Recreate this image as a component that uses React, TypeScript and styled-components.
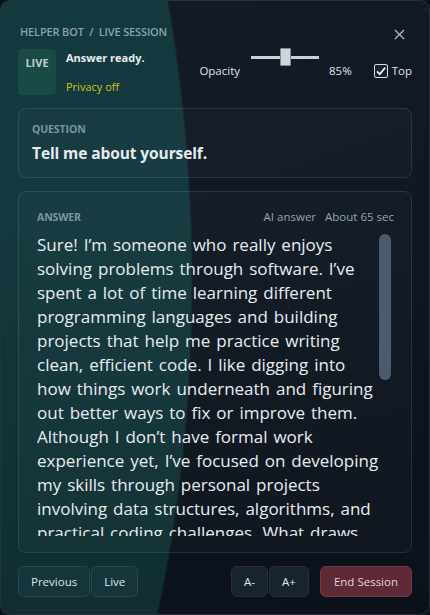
import styled, { createGlobalStyle } from "styled-components";
import { useState } from "react";

const answer =
  "Sure! I’m someone who really enjoys solving problems through software. I’ve spent a lot of time learning different programming languages and building projects that help me practice writing clean, efficient code. I like digging into how things work underneath and figuring out better ways to fix or improve them. Although I don’t have formal work experience yet, I’ve focused on developing my skills through personal projects involving data structures, algorithms, and practical coding challenges. What draws me to software development is the mix of logic and creativity it needs. I enjoy taking a vague problem, breaking it into smaller parts and slowly turning it into something that actually works.";

const Global = createGlobalStyle`
  html, body {
    margin: 0;
    background: #0b1118;
  }
  * { box-sizing: border-box; }
`;

const App = () => {
  const [opacity, setOpacity] = useState(85);
  const [onTop, setOnTop] = useState(true);

  return (
    <>
      <Global />
      <Window>
        <TopBar>
          <Crumb>Helper Bot&nbsp;&nbsp;/&nbsp;&nbsp;Live Session</Crumb>
          <Close aria-label="close">
            <svg width="11" height="11" viewBox="0 0 11 11">
              <path d="M1 1L10 10M10 1L1 10" stroke="#aeb8c2" strokeWidth="1.3" />
            </svg>
          </Close>
        </TopBar>

        <StatusRow>
          <LiveBadge>LIVE</LiveBadge>
          <StatusText>
            <Ready>Answer ready.</Ready>
            <Privacy>Privacy off</Privacy>
          </StatusText>
          <Controls>
            <span>Opacity</span>
            <Range
              type="range"
              min={70}
              max={100}
              value={opacity}
              onChange={(e) => setOpacity(Number(e.target.value))}
            />
            <Percent>{opacity}%</Percent>
            <Check onClick={() => setOnTop(!onTop)}>
              <Box>
                {onTop && (
                  <svg width="12" height="12" viewBox="0 0 12 12">
                    <path d="M2 6.3L4.8 9.2L10.2 2.6" fill="none" stroke="#f1f4f6" strokeWidth="1.8" />
                  </svg>
                )}
              </Box>
              Top
            </Check>
          </Controls>
        </StatusRow>

        <QuestionCard>
          <Tag>Question</Tag>
          <QuestionText>Tell me about yourself.</QuestionText>
        </QuestionCard>

        <AnswerCard>
          <AnswerHead>
            <Tag>Answer</Tag>
            <Meta>
              <span>AI answer</span>
              <span>About 65 sec</span>
            </Meta>
          </AnswerHead>
          <Scroller>
            <AnswerBody>{answer}</AnswerBody>
            {/* thumb sits over the scroll area, like an overlay scrollbar */}
            <Thumb />
          </Scroller>
        </AnswerCard>

        <Footer>
          <Group>
            <Btn $tone="teal">Previous</Btn>
            <Btn $tone="teal">Live</Btn>
          </Group>
          <Group>
            <Btn $tone="slate">A-</Btn>
            <Btn $tone="slate">A+</Btn>
            <EndBtn>End Session</EndBtn>
          </Group>
        </Footer>
      </Window>
    </>
  );
};

export default App;

const Window = styled.div`
  width: 430px;
  height: 615px;
  display: flex;
  flex-direction: column;
  padding: 21px 17px 17px 17px;
  border: 1px solid #25323a;
  border-radius: 10px;
  overflow: hidden;
  font-family: "Open Sans", "Noto Sans", sans-serif;
  color: #e4eaee;
  background:
    linear-gradient(180deg, rgba(0, 0, 0, 0) 35%, rgba(3, 8, 12, 0.22) 100%),
    radial-gradient(ellipse 592px 994px at -400px 280px, rgba(20, 60, 64, 0.9) 99.6%, transparent 100%),
    linear-gradient(160deg, #121c27 0%, #0f1722 60%, #0d141e 100%);
`;

const TopBar = styled.div`
  display: flex;
  align-items: center;
  justify-content: space-between;
  height: 18px;
  padding-left: 2px;
`;

const Crumb = styled.div`
  font-size: 11px;
  font-weight: 600;
  letter-spacing: -0.15px;
  text-transform: uppercase;
  color: #8ea2ad;
`;

const Close = styled.button`
  background: none;
  border: none;
  padding: 0;
  margin-right: 7px;
  margin-top: 6px;
  display: flex;
  cursor: pointer;
`;

const StatusRow = styled.div`
  display: flex;
  align-items: flex-start;
  margin-top: 9px;
  height: 47px;
`;

const LiveBadge = styled.div`
  width: 38px;
  height: 46px;
  border-radius: 4px;
  background: #1a4a45;
  color: #bdd0cc;
  font-size: 11px;
  font-weight: 700;
  text-align: center;
  padding-top: 6px;
`;

const StatusText = styled.div`
  display: flex;
  flex-direction: column;
  justify-content: space-between;
  height: 46px;
  margin-left: 10px;
  padding: 1px 0 1px;
`;

const Ready = styled.div`
  font-size: 11px;
  font-weight: 700;
  color: #e8eef1;
`;

const Privacy = styled.div`
  font-size: 11px;
  color: #d8c21f;
`;

const Controls = styled.div`
  display: flex;
  align-items: center;
  margin-left: auto;
  margin-top: 14px;
  font-size: 11.5px;
  color: #dfe5ea;
`;

const Range = styled.input`
  -webkit-appearance: none;
  appearance: none;
  width: 68px;
  height: 18px;
  margin: 0 0 0 11px;
  align-self: flex-start;
  margin-top: -15px;
  background: transparent;

  &::-webkit-slider-runnable-track {
    height: 3px;
    background: #c9d1d7;
  }
  &::-webkit-slider-thumb {
    -webkit-appearance: none;
    width: 11px;
    height: 18px;
    margin-top: -8px;
    background: #cbd5dc;
    border: 1px solid #7f8a93;
    border-radius: 1px;
  }
`;

const Percent = styled.span`
  margin-left: 10px;
`;

const Check = styled.label`
  display: flex;
  align-items: center;
  gap: 4px;
  margin-left: 22px;
  cursor: pointer;
`;

const Box = styled.span`
  width: 14px;
  height: 14px;
  display: flex;
  align-items: center;
  justify-content: center;
  border: 1px solid #d6dde2;
  border-radius: 2px;
  background: #1a222c;
`;

const Card = styled.div`
  border: 1px solid rgba(160, 190, 200, 0.14);
  border-radius: 8px;
  background: rgba(255, 255, 255, 0.018);
`;

const QuestionCard = styled(Card)`
  margin-top: 12px;
  height: 70px;
  padding: 13px 13px 0;
`;

const Tag = styled.div`
  font-size: 10.5px;
  font-weight: 700;
  text-transform: uppercase;
  color: #7b96a1;
  letter-spacing: -0.1px;
`;

const QuestionText = styled.div`
  margin-top: 6px;
  font-size: 15.5px;
  font-weight: 700;
  letter-spacing: -0.1px;
  color: #e6ecef;
`;

const AnswerCard = styled(Card)`
  margin-top: 13px;
  flex: 1;
  min-height: 0;
  display: flex;
  flex-direction: column;
  padding: 17px 20px 16px 18px;
`;

const AnswerHead = styled.div`
  display: flex;
  justify-content: space-between;
  align-items: center;
  margin-right: -3px;
`;

const Meta = styled.div`
  display: flex;
  gap: 9px;
  font-size: 11.5px;
  color: #97a6b3;
`;

const Scroller = styled.div`
  position: relative;
  flex: 1;
  min-height: 0;
  margin-top: 9px;
  overflow: hidden;
`;

const AnswerBody = styled.div`
  padding-right: 9px;
  font-size: 17px;
  line-height: 24px;
  word-spacing: 1.5px;
  color: #e8edf0;
`;

const Thumb = styled.div`
  position: absolute;
  top: 1px;
  right: 0;
  width: 12px;
  height: 146px;
  border-radius: 6px;
  background: #4b5a6e;
`;

const Footer = styled.div`
  display: flex;
  justify-content: space-between;
  margin-top: 13px;
`;

const Group = styled.div`
  display: flex;
  gap: 1px;
`;

const Btn = styled.button<{ $tone: "teal" | "slate" }>`
  height: 31px;
  margin: 0;
  padding: 0 ${(p) => (p.$tone === "teal" ? 12 : 12)}px;
  border-radius: 6px;
  font-family: inherit;
  font-size: 11.5px;
  color: #dfe6ea;
  cursor: pointer;
  background: ${(p) => (p.$tone === "teal" ? "#16343a" : "#172430")};
  border: 1px solid ${(p) => (p.$tone === "teal" ? "#244a50" : "#25323e")};
`;

const EndBtn = styled.button`
  height: 31px;
  margin: 0 0 0 10px;
  padding: 0 13px;
  border-radius: 6px;
  font-family: inherit;
  font-size: 11.5px;
  color: #e3d6da;
  background: #5d2a35;
  border: 1px solid #7a3542;
  cursor: pointer;
`;
